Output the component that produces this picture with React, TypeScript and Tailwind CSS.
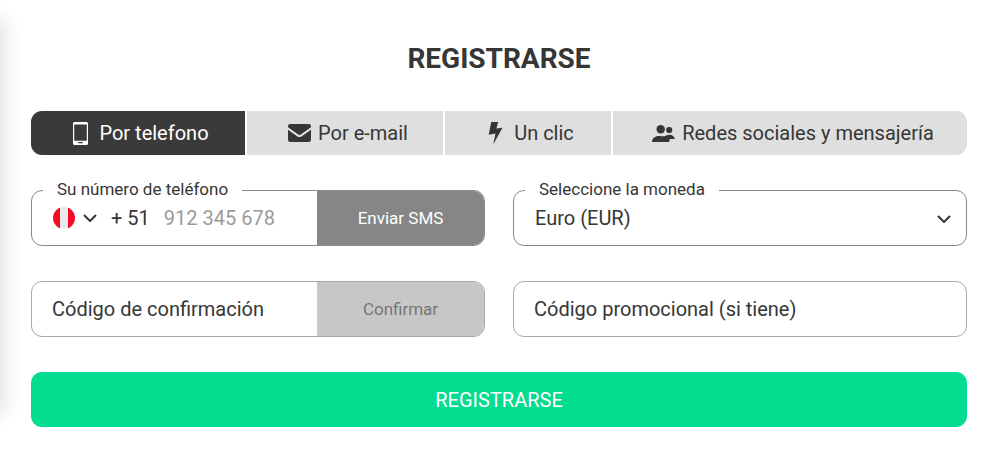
import React, { useState } from "react";

type IconProps = { className?: string };

const PhoneIcon = ({ className }: IconProps) => (
  <svg viewBox="0 0 15 23" className={className} aria-hidden="true">
    <path
      fill="currentColor"
      fillRule="evenodd"
      d="M1.500 0h12A1.500 1.500 0 0 1 15 1.500v20a1.500 1.500 0 0 1-1.500 1.500h-12A1.500 1.500 0 0 1 0 21.500v-20A1.500 1.500 0 0 1 1.500 0Zm-.300 2.400v16.300h12.600V2.400Zm4.100 17.500v1.400h4.400v-1.400Z"
    />
  </svg>
);

const MailIcon = ({ className }: IconProps) => (
  <svg viewBox="0 0 23 18" className={className} aria-hidden="true">
    <path fill="currentColor" d="M2.200 0h18.600A2.200 2.200 0 0 1 23 2.200v1l-10.300 7.400a2 2 0 0 1-2.400 0L0 3.200V2.200A2.200 2.200 0 0 1 2.200 0Z" />
    <path fill="currentColor" d="M0 5.700l9.400 6.700a3.700 3.700 0 0 0 4.200 0L23 5.700v10.100a2.200 2.200 0 0 1-2.200 2.200H2.200A2.200 2.200 0 0 1 0 15.800Z" />
  </svg>
);

const BoltIcon = ({ className }: IconProps) => (
  <svg viewBox="0 0 15 23" className={className} aria-hidden="true">
    <path fill="currentColor" d="M3.200 0h7L8.300 6.600 14.500 5.800 5.200 22.500 7.500 11.600 0.700 12.800Z" />
  </svg>
);

const PeopleIcon = ({ className }: IconProps) => (
  <svg viewBox="0 0 23 17" className={className} aria-hidden="true">
    <g fill="currentColor">
      <circle cx="8.700" cy="4.300" r="4.200" />
      <circle cx="17.200" cy="5" r="3.100" />
      <path d="M0 17c0-3.600 2.700-6 7-6 2.800 0 4.300.6 6 0 1.300-.500 2.400-1.300 4-1.300 3.500 0 5.200 1.600 6 4.300h-5.200L17 17Z" />
    </g>
  </svg>
);

const Chevron = ({ className }: IconProps) => (
  <svg viewBox="0 0 14 8" className={className} aria-hidden="true">
    <path d="M1 1l6 6 6-6" fill="none" stroke="currentColor" strokeWidth="2" />
  </svg>
);

const PeruFlag = ({ className }: IconProps) => (
  <svg viewBox="0 0 22 22" className={className} aria-hidden="true">
    <clipPath id="flag-disc">
      <circle cx="11" cy="11" r="11" />
    </clipPath>
    <g clipPath="url(#flag-disc)">
      <rect width="22" height="22" fill="#ebebeb" />
      <rect width="7" height="22" fill="#f50b25" />
      <rect x="15" width="7" height="22" fill="#f50b25" />
    </g>
  </svg>
);

const tabs = [
  { label: "Por telefono", icon: <PhoneIcon className="h-[23px] w-[15px]" />, gap: "gap-[11px]" },
  { label: "Por e-mail", icon: <MailIcon className="h-[18px] w-[23px]" />, gap: "gap-[7px]" },
  { label: "Un clic", icon: <BoltIcon className="h-[23px] w-[15px]" />, gap: "gap-[11px]" },
  { label: "Redes sociales y mensajería", icon: <PeopleIcon className="h-[17px] w-[23px]" />, gap: "gap-[7px]" },
];

const fieldBox = "flex h-14 min-w-0 rounded-[11px] border";

export default function App() {
  const [active, setActive] = useState(0);

  return (
    <main className="relative overflow-hidden bg-white pt-[41px] pr-[33px] pb-[31px] pl-[31px] font-[Roboto,sans-serif] text-[20px] leading-6 text-[#363636]">
      <div className="absolute top-6 bottom-12 -left-4 w-4 shadow-[0_0_20px_4px_rgba(0,0,0,0.13)]" aria-hidden="true" />

      <h1 className="text-center text-[28px] leading-9 font-bold">REGISTRARSE</h1>

      <div role="tablist" className="mt-[34px] grid grid-cols-[214fr_196fr_166fr_354fr] gap-0.5 overflow-hidden rounded-[11px]">
        {tabs.map((tab, i) => (
          <button
            key={tab.label}
            type="button"
            role="tab"
            aria-selected={i === active}
            onClick={() => setActive(i)}
            className={`flex h-11 items-center justify-center pl-1.5 whitespace-nowrap ${tab.gap} ${
              i === active ? "bg-[#3a3a3a] text-white" : "bg-[#dfdfdf] text-[#363636]"
            }`}
          >
            {tab.icon}
            {tab.label}
          </button>
        ))}
      </div>

      <form onSubmit={(e) => e.preventDefault()} className="mt-[35px] grid grid-cols-2 gap-x-7 gap-y-[35px]">
        <fieldset className="min-w-0 rounded-[11px] border border-[#8a8a8a]">
          <legend className="ml-[11px] flex h-px items-center px-3.5 text-[17px]">
            <label htmlFor="phone" className="pb-1">Su número de teléfono</label>
          </legend>
          <div className="flex h-[54px]">
            <button type="button" aria-label="Perú" className="flex items-center gap-2 pl-[21px]">
              <PeruFlag className="size-[22px]" />
              <Chevron className="h-2 w-3.5" />
            </button>
            <span className="self-center pl-3.5 whitespace-nowrap">+ 51</span>
            <input
              id="phone"
              type="tel"
              placeholder="912 345 678"
              className="min-w-0 flex-1 bg-transparent pl-3.5 outline-none placeholder:text-[#9a9a9a]"
            />
            <button type="button" className="w-[167px] rounded-r-[10px] bg-[#868686] text-[17px] text-white">
              Enviar SMS
            </button>
          </div>
        </fieldset>

        <fieldset className="min-w-0 rounded-[11px] border border-[#8a8a8a]">
          <legend className="ml-[11px] flex h-px items-center px-3.5 text-[17px]">
            <label htmlFor="currency" className="pb-1">Seleccione la moneda</label>
          </legend>
          <div className="relative h-[54px]">
            <select id="currency" className="size-full appearance-none bg-transparent pr-10 pl-[21px] outline-none">
              <option>Euro (EUR)</option>
            </select>
            <Chevron className="pointer-events-none absolute top-6 right-[15px] h-2 w-3.5" />
          </div>
        </fieldset>

        <div className={`${fieldBox} border-[#a9a9a9]`}>
          <input
            type="text"
            aria-label="Código de confirmación"
            placeholder="Código de confirmación"
            className="min-w-0 flex-1 bg-transparent pl-5 outline-none placeholder:text-[#363636]"
          />
          <button type="button" className="w-[167px] rounded-r-[10px] bg-[#c7c7c7] text-[17px] text-[#757575]">
            Confirmar
          </button>
        </div>

        <div className={`${fieldBox} border-[#a9a9a9]`}>
          <input
            type="text"
            aria-label="Código promocional (si tiene)"
            placeholder="Código promocional (si tiene)"
            className="min-w-0 flex-1 bg-transparent px-5 outline-none placeholder:text-[#363636]"
          />
        </div>

        <button type="submit" className="col-span-2 h-[55px] rounded-[11px] bg-[#04dc8f] text-white">
          REGISTRARSE
        </button>
      </form>
    </main>
  );
}
